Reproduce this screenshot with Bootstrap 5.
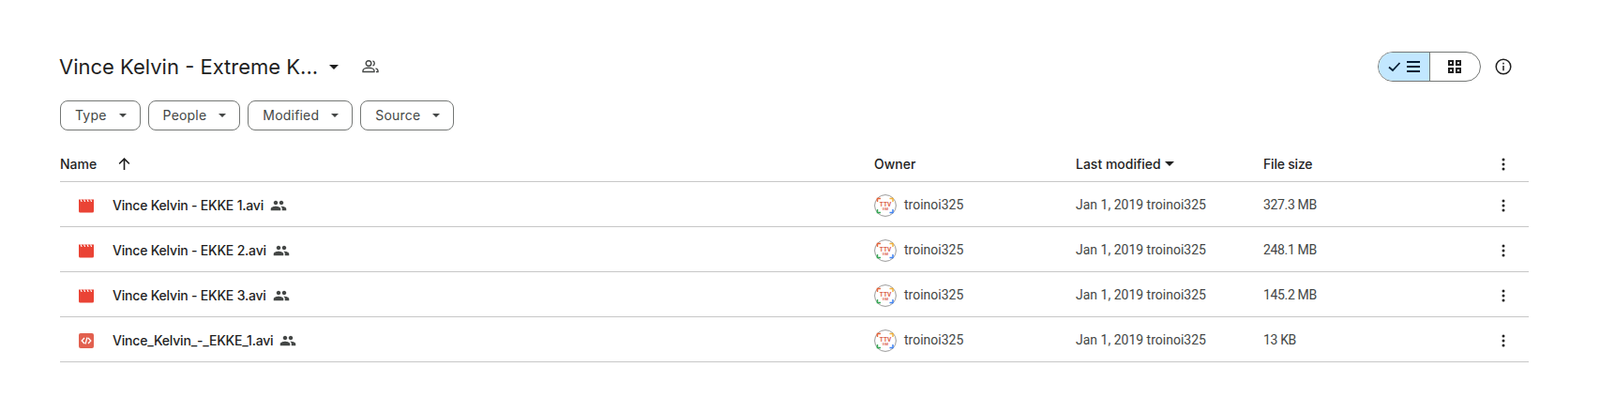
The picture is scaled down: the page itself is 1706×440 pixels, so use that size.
<!DOCTYPE html>
<html lang="en">
  <head>
    <meta charset="UTF-8" />
    <title>Vince Kelvin - Extreme K...</title>
    <link href="https://cdn.jsdelivr.net/npm/bootstrap@5.3.3/dist/css/bootstrap.min.css" rel="stylesheet" />
    <style>
      body {
        font-family: Roboto, "Liberation Sans", sans-serif;
        font-size: 14px;
        color: #1f1f1f;
        background: #fff;
      }
      .drive-page {
        padding: 55px 76px 0 64px;
      }
      .title-row {
        height: 32px;
      }
      .folder-title {
        font-family: Inter, Roboto, sans-serif;
        font-size: 22px;
        line-height: 32px;
        font-weight: 400;
        margin: 0 0 0 -1px;
        width: 288px;
        white-space: nowrap;
      }
      .title-people {
        margin-left: 24px;
      }
      .view-toggle {
        width: 110px;
        height: 32px;
        border: 1px solid #747775;
        border-radius: 16px;
        overflow: hidden;
        margin-right: 15px;
      }
      .view-toggle > div {
        flex: 1;
      }
      .view-list {
        background: #c2e7ff;
        border-right: 1px solid #747775;
      }
      .info-btn {
        margin-right: 18px;
      }
      .filter-row {
        margin-top: 20px;
        gap: 8px;
      }
      .filter-chip {
        font-family: Inter, Roboto, sans-serif;
        height: 32px;
        border: 1px solid #747775;
        border-radius: 8px;
        padding: 0 14px 1px 15px;
        gap: 13px;
        color: #444746;
        font-weight: 400;
        letter-spacing: 0.2px;
        background: #fff;
      }
      .file-head,
      .file-row {
        border-bottom: 1px solid #c7c7c7;
      }
      .file-head {
        font-family: Inter, Roboto, sans-serif;
        height: 48px;
        margin-top: 7px;
        padding-top: 10px;
        font-weight: 450;
      }
      .file-row {
        height: 48px;
        padding-top: 2px;
        color: #444746;
      }
      .col-name {
        width: 868px;
      }
      .col-owner {
        width: 215px;
      }
      .col-modified {
        width: 200px;
      }
      .col-size {
        flex: 1;
      }
      .file-size {
        letter-spacing: -0.35px;
      }
      .head-size {
        letter-spacing: -0.2px;
      }
      .col-more {
        width: 16px;
        margin-right: 19px;
      }
      .sort-arrow {
        margin-left: 22px;
      }
      .file-icon {
        margin-left: 20px;
        margin-right: 20px;
      }
      .file-name {
        font-family: Inter, Roboto, sans-serif;
        color: #1f1f1f;
        font-weight: 450;
        letter-spacing: -0.2px;
      }
      .shared-icon {
        margin-left: 7px;
      }
      .owner-pic {
        margin-right: 8px;
      }
      .sort-caret {
        margin-left: 4px;
      }
      .avatar-label {
        font-family: Roboto, sans-serif;
        font-weight: 700;
        fill: #d9624a;
      }
    </style>
  </head>
  <body>
    <svg width="0" height="0" class="d-block">
      <symbol id="caret" viewBox="0 0 10 5"><path d="M0 0h10L5 5z" /></symbol>
      <symbol id="people" viewBox="0 0 24 24"><path d="M16 11c1.66 0 2.99-1.34 2.99-3S17.66 5 16 5s-3 1.34-3 3 1.34 3 3 3zm-8 0c1.66 0 2.99-1.34 2.99-3S9.66 5 8 5 5 6.34 5 8s1.34 3 3 3zm0 2c-2.33 0-7 1.17-7 3.5V19h14v-2.5C15 14.17 10.33 13 8 13zm8 0c-.29 0-.62.02-.97.05 1.16.84 1.97 1.97 1.97 3.45V19h6v-2.5c0-2.33-4.67-3.5-7-3.5z" /></symbol>
      <symbol id="more" viewBox="0 0 16 16"><circle cx="8" cy="3" r="1.500" /><circle cx="8" cy="8" r="1.500" /><circle cx="8" cy="13" r="1.500" /></symbol>
      <symbol id="video" viewBox="0 0 16 16">
        <path d="M0 1.500h16V14a1.500 1.500 0 0 1-1.500 1.500h-13A1.500 1.500 0 0 1 0 14z" fill="#ea4335" />
        <path d="M1.500 1.500 2.500 4h1.200l-1-2.500zM5 1.500 6 4h1.200l-1-2.500zM8.500 1.500l1 2.500h1.200l-1-2.500zM12 1.500l1 2.500h1.200l-1-2.500z" fill="#fff" />
      </symbol>
      <symbol id="code" viewBox="0 0 16 16"><rect width="16" height="16" rx="2" fill="#e2604f" /><path d="M6 5 3.200 8 6 11M10 5l2.800 3L10 11M9 4.500 7 11.500" fill="none" stroke="#fff" stroke-width="1.300" /></symbol>
    </svg>

    <div class="drive-page">
      <div class="title-row d-flex align-items-center">
        <h1 class="folder-title">Vince Kelvin - Extreme K...</h1>
        <svg width="10" height="5" fill="#1f1f1f"><use href="#caret" /></svg>
        <svg class="title-people" width="20" height="20" viewBox="0 0 20 20" fill="none" stroke="#444746" stroke-width="1.400"><circle cx="8" cy="6.500" r="2.800" /><path d="M2 15.500v-1.300c0-1.800 3-3 6-3s6 1.200 6 3v1.300zM12.500 3.900a2.800 2.800 0 0 1 0 5.200M15.500 11.800c1.500.5 2.500 1.300 2.500 2.400v1.300h-2" /></svg>
        <div class="ms-auto d-flex align-items-center">
          <div class="view-toggle d-flex">
            <div class="view-list d-flex align-items-center justify-content-center">
              <svg width="34" height="14" viewBox="0 0 34 14" fill="none" stroke="#001d35" stroke-width="1.800"><path d="M1 7.500 5 11l7.500-8" /><path d="M20 2h14M20 7h14M20 12h14" /></svg>
            </div>
            <div class="d-flex align-items-center justify-content-center">
              <svg width="14" height="14" viewBox="0 0 14 14" fill="none" stroke="#1f1f1f" stroke-width="2"><path d="M1 1h4v4H1zM9 1h4v4H9zM1 9h4v4H1zM9 9h4v4H9z" /></svg>
            </div>
          </div>
          <svg class="info-btn" width="18" height="18" viewBox="0 0 18 18" fill="none" stroke="#1f1f1f" stroke-width="1.500"><circle cx="9" cy="9" r="7.800" /><path d="M9 8v5.200M9 4.700v1.700" /></svg>
        </div>
      </div>

      <div class="filter-row d-flex">
        <div class="filter-chip d-flex align-items-center">Type <svg width="8" height="4" fill="#444746"><use href="#caret" /></svg></div>
        <div class="filter-chip d-flex align-items-center">People <svg width="8" height="4" fill="#444746"><use href="#caret" /></svg></div>
        <div class="filter-chip d-flex align-items-center">Modified <svg width="8" height="4" fill="#444746"><use href="#caret" /></svg></div>
        <div class="filter-chip d-flex align-items-center">Source <svg width="8" height="4" fill="#444746"><use href="#caret" /></svg></div>
      </div>

      <div class="file-head d-flex align-items-center">
        <div class="col-name d-flex align-items-center">
          Name
          <svg class="sort-arrow" width="15" height="15" viewBox="0 0 14 14" fill="none" stroke="#1f1f1f" stroke-width="1.500"><path d="M7 13V2M2 7l5-5 5 5" /></svg>
        </div>
        <div class="col-owner">Owner</div>
        <div class="col-modified d-flex align-items-center">Last modified <svg class="sort-caret" width="10" height="5" fill="#1f1f1f"><use href="#caret" /></svg></div>
        <div class="col-size head-size">File size</div>
        <svg class="col-more" width="16" height="16" fill="#1f1f1f"><use href="#more" /></svg>
      </div>

      <div id="fileList"></div>
    </div>

    <script>
      // file rows, same markup for all four
      const files = [
        { name: "Vince Kelvin - EKKE 1.avi", icon: "video", size: "327.3 MB" },
        { name: "Vince Kelvin - EKKE 2.avi", icon: "video", size: "248.1 MB" },
        { name: "Vince Kelvin - EKKE 3.avi", icon: "video", size: "145.2 MB" },
        { name: "Vince_Kelvin_-_EKKE_1.avi", icon: "code", size: "13 KB" },
      ];
      // owner picture is drawn per row so its label stays visible text
      const avatar = `
        <svg class="owner-pic" width="24" height="24" viewBox="0 0 24 24">
          <circle cx="12" cy="12" r="11.400" fill="#fff" stroke="#9a9a9a" stroke-width="1" />
          <path d="M3.500 8V4.500H7" fill="none" stroke="#e8663c" stroke-width="1.500" />
          <path d="M16.500 4.500H20V8" fill="none" stroke="#f3b33d" stroke-width="1.500" />
          <path d="M3.500 16v3.500H7" fill="none" stroke="#34a853" stroke-width="1.500" />
          <path d="M16.500 19.500H20V16" fill="none" stroke="#4285f4" stroke-width="1.500" />
          <text class="avatar-label" x="12" y="12.500" font-size="6.500" text-anchor="middle">TTV</text>
          <text class="avatar-label" x="12" y="17" font-size="3.500" text-anchor="middle">ViM</text>
        </svg>`;
      let html = "";
      for (const file of files) {
        html += `
        <div class="file-row d-flex align-items-center">
          <div class="col-name d-flex align-items-center">
            <svg class="file-icon" width="16" height="16"><use href="#${file.icon}" /></svg>
            <span class="file-name">${file.name}</span>
            <svg class="shared-icon" width="18" height="18" fill="#444746"><use href="#people" /></svg>
          </div>
          <div class="col-owner d-flex align-items-center">
            ${avatar}
            troinoi325
          </div>
          <div class="col-modified">Jan 1, 2019 troinoi325</div>
          <div class="col-size file-size">${file.size}</div>
          <svg class="col-more" width="16" height="16" fill="#1f1f1f"><use href="#more" /></svg>
        </div>`;
      }
      document.getElementById("fileList").innerHTML = html;
    </script>
    <script src="https://cdn.jsdelivr.net/npm/bootstrap@5.3.3/dist/js/bootstrap.bundle.min.js"></script>
  </body>
</html>
